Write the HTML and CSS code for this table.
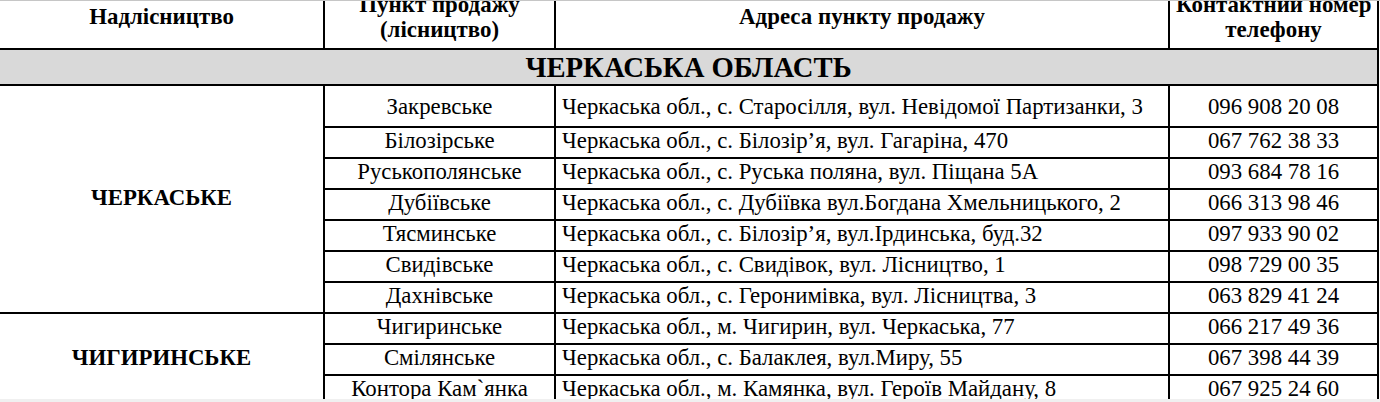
FILE: index.html
```html
<!DOCTYPE html>
<html lang="uk">
<head>
<meta charset="utf-8">
<title>Пункти продажу</title>
<link rel="stylesheet" href="styles.css">
</head>
<body>
<div class="viewport">
  <table class="sales">
    <colgroup>
      <col class="w1"><col class="w2"><col class="w3"><col class="w4">
    </colgroup>
    <thead>
      <tr class="head">
        <th class="c1">Надлісництво</th>
        <th>Пункт продажу<br>(лісництво)</th>
        <th>Адреса пункту продажу</th>
        <th>Контактний номер<br>телефону</th>
      </tr>
    </thead>
    <tbody>
      <tr class="region"><td class="c1" colspan="4">ЧЕРКАСЬКА ОБЛАСТЬ</td></tr>
      <tr class="row first">
        <td class="c1 org" rowspan="7">ЧЕРКАСЬКЕ</td>
        <td class="ctr">Закревське</td>
        <td class="addr">Черкаська обл., с. Старосілля, вул. Невідомої Партизанки, 3</td>
        <td class="ctr">096 908 20 08</td>
      </tr>
      <tr class="row">
        <td class="ctr">Білозірське</td>
        <td class="addr">Черкаська обл., с. Білозір’я, вул. Гагаріна, 470</td>
        <td class="ctr">067 762 38 33</td>
      </tr>
      <tr class="row">
        <td class="ctr">Руськополянське</td>
        <td class="addr">Черкаська обл., с. Руська поляна, вул. Піщана 5А</td>
        <td class="ctr">093 684 78 16</td>
      </tr>
      <tr class="row">
        <td class="ctr">Дубіївське</td>
        <td class="addr">Черкаська обл., с. Дубіївка вул.Богдана Хмельницького, 2</td>
        <td class="ctr">066 313 98 46</td>
      </tr>
      <tr class="row">
        <td class="ctr">Тясминське</td>
        <td class="addr">Черкаська обл., с. Білозір’я, вул.Ірдинська, буд.32</td>
        <td class="ctr">097 933 90 02</td>
      </tr>
      <tr class="row">
        <td class="ctr">Свидівське</td>
        <td class="addr">Черкаська обл., с. Свидівок, вул. Лісництво, 1</td>
        <td class="ctr">098 729 00 35</td>
      </tr>
      <tr class="row">
        <td class="ctr">Дахнівське</td>
        <td class="addr">Черкаська обл., с. Геронимівка, вул. Лісництва, 3</td>
        <td class="ctr">063 829 41 24</td>
      </tr>
      <tr class="row">
        <td class="c1 org" rowspan="3">ЧИГИРИНСЬКЕ</td>
        <td class="ctr">Чигиринське</td>
        <td class="addr">Черкаська обл., м. Чигирин, вул. Черкаська, 77</td>
        <td class="ctr">066 217 49 36</td>
      </tr>
      <tr class="row">
        <td class="ctr">Смілянське</td>
        <td class="addr">Черкаська обл., с. Балаклея, вул.Миру, 55</td>
        <td class="ctr">067 398 44 39</td>
      </tr>
      <tr class="row">
        <td class="ctr">Контора Кам`янка</td>
        <td class="addr">Черкаська обл., м. Камянка, вул. Героїв Майдану, 8</td>
        <td class="ctr">067 925 24 60</td>
      </tr>
    </tbody>
  </table>
</div>
<div class="scrollbar"></div>
</body>
</html>
```

FILE: styles.css
```css
html, body {
  margin: 0;
  padding: 0;
  background: #fff;
}

body {
  width: 1380px;
  height: 402px;
  overflow: hidden;
  font-family: "Liberation Serif", "Times New Roman", serif;
  color: #000;
}

.viewport {
  height: 398px;
  overflow: hidden;
  border-top: 1px solid #c6c6c6;
}

.scrollbar {
  height: 3px;
  background: #f0f0f0;
}

.sales {
  border-collapse: collapse;
  table-layout: fixed;
  width: 1378px;
  margin-top: -12px;
}

.w1 { width: 324px; }
.w2 { width: 231px; }
.w3 { width: 614px; }
.w4 { width: 209px; }

.sales th,
.sales td {
  border: 2px solid #000;
  padding: 0 6px;
  line-height: 25px;
  white-space: nowrap;
  overflow: hidden;
}

.sales .c1 {
  border-left: none;
}

.head {
  height: 59px;
}

.head th {
  font-size: 22.9px;
  font-weight: bold;
  text-align: center;
  vertical-align: middle;
  padding-top: 0;
  padding-bottom: 6px;
}

.region {
  height: 36px;
}

.region td {
  background: #d9d9d9;
  font-size: 28.7px;
  font-weight: bold;
  text-align: center;
  line-height: 30px;
}

.row {
  height: 31px;
}

.row.first {
  height: 42px;
}

.row td {
  font-size: 22.8px;
  vertical-align: middle;
  padding-bottom: 4px;
}

.row.first td.ctr,
.row.first td.addr {
  padding-top: 4px;
}

.ctr {
  text-align: center;
}

.addr {
  text-align: left;
}

.org {
  font-weight: bold;
  text-align: center;
}
```
